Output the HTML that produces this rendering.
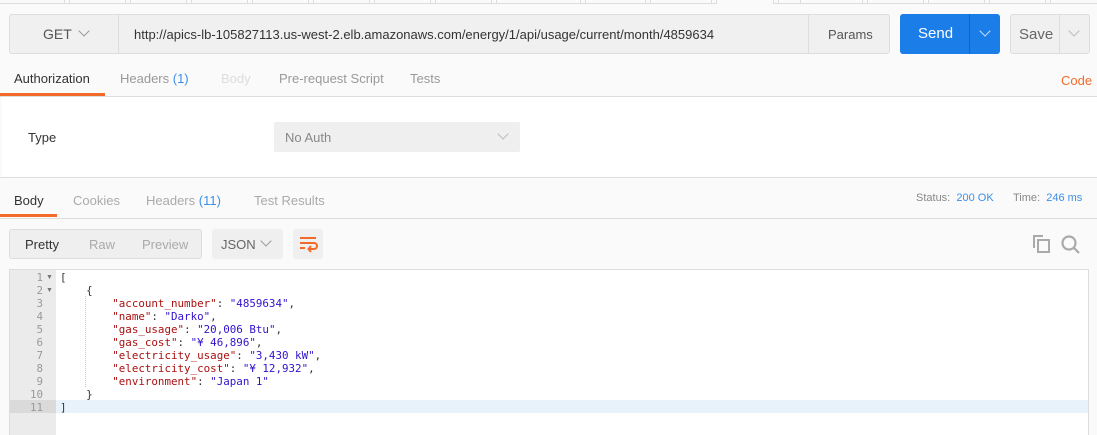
<!DOCTYPE html>
<html><head><meta charset="utf-8"><style>
*{box-sizing:border-box;margin:0;padding:0}
body{width:1097px;height:435px;overflow:hidden;background:#fafafa;font-family:"Liberation Sans",sans-serif;font-size:13px;color:#505050;position:relative}
.a{position:absolute}
.tabline{position:absolute;top:3px;height:1px;background:#ddd}
.v{position:absolute;top:0;width:1px;height:4px;background:#ddd}
.chev{display:block;width:8px;height:8px;border-right:1.5px solid #999;border-bottom:1.5px solid #999;transform:rotate(45deg)}
.code{font-family:"DejaVu Sans Mono","Liberation Mono",monospace;font-size:10.85px;line-height:13px;white-space:pre}
.k{color:#a11}.s{color:#31c}.p{color:#333}
</style></head><body>
<div class="tabline" style="left:0;width:716px"></div>
<div class="tabline" style="left:773px;width:324px"></div>
<div id="vs"></div>
<div class="a" style="left:9px;top:14px;width:881px;height:40px;border:1px solid #ddd;border-radius:3px;background:#f0f0f0"></div>
<div class="a" style="left:118px;top:14px;width:1px;height:40px;background:#ddd"></div>
<div class="a" style="left:808px;top:14px;width:1px;height:40px;background:#ddd"></div>
<div class="a" style="left:43px;top:26px;font-size:14px;color:#555">GET</div>
<div class="a" style="left:80px;top:27px"><span class="chev"></span></div>
<div class="a" style="left:134px;top:27px;font-size:13px;color:#333">http://apics-lb-105827113.us-west-2.elb.amazonaws.com/energy/1/api/usage/current/month/4859634</div>
<div class="a" style="left:828px;top:27px;color:#555">Params</div>
<div class="a" style="left:900px;top:14px;width:100px;height:40px;border-radius:3px;background:#1b7de8"></div>
<div class="a" style="left:969px;top:14px;width:1px;height:40px;background:#1466c0"></div>
<div class="a" style="left:918px;top:25px;font-size:15px;color:#fff">Send</div>
<div class="a" style="left:981px;top:27px"><span class="chev" style="border-color:#cde"></span></div>
<div class="a" style="left:1010px;top:14px;width:80px;height:40px;border:1px solid #ddd;border-radius:3px;background:#f0f0f0"></div>
<div class="a" style="left:1059px;top:14px;width:1px;height:40px;background:#ddd"></div>
<div class="a" style="left:1019px;top:26px;font-size:15px;color:#666">Save</div>
<div class="a" style="left:1070px;top:27px"><span class="chev" style="border-color:#bbb"></span></div>
<div class="a" style="left:14px;top:71px;color:#333">Authorization</div>
<div class="a" style="left:0;top:93px;width:105px;height:3px;background:#f26b2b"></div>
<div class="a" style="left:120px;top:71px;color:#999">Headers <span style="color:#3c8fe8">(1)</span></div>
<div class="a" style="left:221px;top:71px;color:#ddd">Body</div>
<div class="a" style="left:279px;top:71px;color:#999">Pre-request Script</div>
<div class="a" style="left:410px;top:71px;color:#999">Tests</div>
<div class="a" style="left:1061px;top:73px;color:#f26b2b">Code</div>
<div class="a" style="left:0;top:96px;width:1097px;height:1px;background:#ddd"></div>
<div class="a" style="left:2px;top:97px;width:1095px;height:80px;background:#fff"></div>
<div class="a" style="left:28px;top:130px;color:#333">Type</div>
<div class="a" style="left:274px;top:122px;width:246px;height:30px;background:#efefef;border-radius:2px"></div>
<div class="a" style="left:285px;top:130px;color:#888">No Auth</div>
<div class="a" style="left:499px;top:130px"><span class="chev" style="border-color:#bbb"></span></div>
<div class="a" style="left:0;top:177px;width:1097px;height:1px;background:#ddd"></div>
<div class="a" style="left:14px;top:193px;color:#333">Body</div>
<div class="a" style="left:0;top:214px;width:57px;height:3px;background:#f26b2b"></div>
<div class="a" style="left:73px;top:193px;color:#aaa">Cookies</div>
<div class="a" style="left:146px;top:193px;color:#aaa">Headers <span style="color:#3c8fe8">(11)</span></div>
<div class="a" style="left:254px;top:193px;color:#aaa">Test Results</div>
<div class="a" style="left:916px;top:192px;font-size:11px;color:#888">Status: <span style="color:#3c8fe8">&nbsp;200 OK</span></div>
<div class="a" style="left:1013px;top:192px;font-size:11px;color:#888">Time: <span style="color:#3c8fe8">&nbsp;246 ms</span></div>
<div class="a" style="left:0;top:218px;width:1097px;height:1px;background:#ddd"></div>
<div class="a" style="left:0;top:219px;width:1097px;height:216px;background:#fafafa"></div>
<div class="a" style="left:9px;top:229px;width:193px;height:30px;border:1px solid #ddd;border-radius:3px;background:#efefef"></div>
<div class="a" style="left:25px;top:237px;color:#333">Pretty</div>
<div class="a" style="left:89px;top:237px;color:#aaa">Raw</div>
<div class="a" style="left:142px;top:237px;color:#aaa">Preview</div>
<div class="a" style="left:212px;top:229px;width:71px;height:30px;border-radius:3px;background:#efefef"></div>
<div class="a" style="left:221px;top:237px;color:#666">JSON</div>
<div class="a" style="left:262px;top:237px"><span class="chev"></span></div>
<div class="a" style="left:293px;top:229px;width:30px;height:30px;border-radius:3px;background:#efefef"></div>
<svg class="a" style="left:298px;top:234px" width="20" height="20" viewBox="0 0 20 20"><g stroke="#f26b2b" stroke-width="2" fill="none"><path d="M2 4h16M2 9h14a3 3 0 0 1 0 6h-5M2 14h5"/><path d="M13 12l-2.5 3 2.5 3"/></g></svg>
<svg class="a" style="left:1032px;top:234px" width="20" height="20" viewBox="0 0 20 20"><g stroke="#aaa" stroke-width="2" fill="none"><path d="M2 14V2h9"/><rect x="6" y="6" width="11" height="12"/></g></svg>
<svg class="a" style="left:1060px;top:234px" width="22" height="22" viewBox="0 0 22 22"><g stroke="#aaa" stroke-width="2.2" fill="none"><circle cx="9" cy="9" r="6.5"/><path d="M14 14l5 5"/></g></svg>
<div class="a" style="left:9px;top:269px;width:1080px;height:166px;border:1px solid #ddd;border-bottom:none;background:#fff"></div>
<div class="a" style="left:10px;top:270px;width:46px;height:165px;background:#ebebeb"></div>
<div class="a" style="left:56px;top:400px;width:1032px;height:13px;background:#e8f2fb"></div>
<div class="a" style="left:10px;top:400px;width:46px;height:13px;background:#dadada"></div>
<div class="a" style="left:85px;top:296px;height:91px;border-left:1px dotted #ccc"></div>
<div class="a code" style="left:22px;top:271px;color:#999;text-align:right;width:21px">1
2
3
4
5
6
7
8
9
10
11</div>
<div class="a" style="left:46px;top:271px;font-size:7px;color:#777;line-height:13px">▼<br>▼</div>
<div class="a code p" style="left:60px;top:271px">[
    {
        <span class="k">"account_number"</span>: <span class="s">"4859634"</span>,
        <span class="k">"name"</span>: <span class="s">"Darko"</span>,
        <span class="k">"gas_usage"</span>: <span class="s">"20,006 Btu"</span>,
        <span class="k">"gas_cost"</span>: <span class="s">"¥ 46,896"</span>,
        <span class="k">"electricity_usage"</span>: <span class="s">"3,430 kW"</span>,
        <span class="k">"electricity_cost"</span>: <span class="s">"¥ 12,932"</span>,
        <span class="k">"environment"</span>: <span class="s">"Japan 1"</span>
    }
]</div>
<script>
var xs=[64,69,125,130,186,191,247,252,308,313,369,374,430,435,491,496,580,585,645,650,711,716,773,778,800,862,867,923,928,984,989,1045,1050];
var h='';xs.forEach(function(x){h+='<div class="v" style="left:'+x+'px"></div>'});document.getElementById('vs').innerHTML=h;
</script>
</body></html>
